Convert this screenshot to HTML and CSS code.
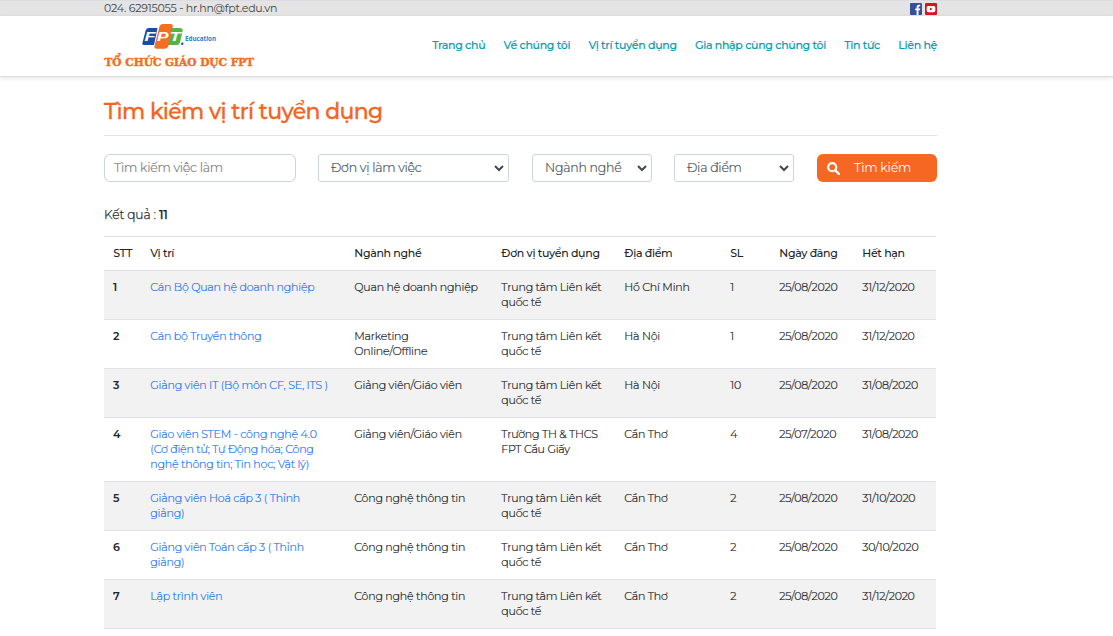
FILE: index.html
```html
<!DOCTYPE html>
<html lang="vi">
<head>
<meta charset="utf-8">
<title>Tìm kiếm vị trí tuyển dụng</title>
<link rel="stylesheet" href="styles.css">
</head>
<body>
<div class="topbar">
  <div class="container topbar-inner">
    <span class="contact">024. 62915055 - hr.hn@fpt.edu.vn</span>
    <div class="social">
      <svg width="12" height="12" viewBox="0 0 12 12"><rect width="12" height="12" rx="1" fill="#36519a"/><path d="M6.600 12V7.300H5.200V5.400h1.400V4.200c0-1.700.9-2.500 2.300-2.500h1.300v1.800h-.8c-.7 0-.9.3-.9.9v1h1.700l-.2 1.900H8.500V12z" fill="#fff"/></svg>
      <svg width="12" height="12" viewBox="0 0 12 12"><rect width="12" height="12" rx="1" fill="#cf1820"/><rect x="1.700" y="3" width="8.600" height="6.200" rx="1.600" fill="#fff"/><path d="M5 4.600v3l2.600-1.500z" fill="#cf1820"/></svg>
    </div>
  </div>
</div>
<header class="header">
  <div class="container header-inner">
    <svg class="logo" width="152" height="52" viewBox="0 0 152 52">
      <path d="M41.500 9Q42.300 6 45 6H53.500L50 23H40.500Q38 23 38.400 21z" fill="#164f9f"/>
      <path d="M66.500 6H75Q79.300 6 78.600 9L76 20.500Q75.400 23 72.500 23H62z" fill="#4db748"/>
      <path d="M55.300 5Q56.100 2 59 2H66.500Q69.200 2 68.700 5L64.500 23.500Q63.500 26.700 60.500 26.700H52.500Q49.900 26.700 50.500 24z" fill="#f36f21"/>
      <g class="logo-letter"><text x="40.500" y="18.800" textLength="11" lengthAdjust="spacingAndGlyphs">F</text><text x="53" y="18.800" textLength="11.500" lengthAdjust="spacingAndGlyphs">P</text><text x="65.500" y="18.800" textLength="11" lengthAdjust="spacingAndGlyphs">T</text></g>
      <circle cx="78.300" cy="21.700" r="1.200" fill="#164f9f"/>
      <text class="logo-edu" x="81" y="19" textLength="31" lengthAdjust="spacingAndGlyphs">Education</text>
      <text class="logo-org" x="0.500" y="43.700" textLength="149.500" lengthAdjust="spacingAndGlyphs">TỔ CHỨC GIÁO DỤC FPT</text>
    </svg>
    <nav class="nav">
      <a>Trang chủ</a><a>Về chúng tôi</a><a>Vị trí tuyển dụng</a><a>Gia nhập cùng chúng tôi</a><a>Tin tức</a><a>Liên hệ</a>
    </nav>
  </div>
</header>
<main class="container">
  <h1>Tìm kiếm vị trí tuyển dụng</h1>
  <form class="search">
    <div class="field keyword"><span>Tìm kiếm việc làm</span></div>
    <div class="field select"><span>Đơn vị làm việc</span><svg width="10" height="7" viewBox="0 0 10 7"><path d="M1 1l4 4 4-4"/></svg></div>
    <div class="field select"><span>Ngành nghề</span><svg width="10" height="7" viewBox="0 0 10 7"><path d="M1 1l4 4 4-4"/></svg></div>
    <div class="field select"><span>Địa điểm</span><svg width="10" height="7" viewBox="0 0 10 7"><path d="M1 1l4 4 4-4"/></svg></div>
    <div class="submit"><svg width="13" height="13" viewBox="0 0 13 13"><circle cx="5.200" cy="5.200" r="4" fill="none" stroke="#fff" stroke-width="2.200"/><path d="M8.300 8.300l3.500 3.500" stroke="#fff" stroke-width="2.500" stroke-linecap="round"/></svg><span>Tìm kiếm</span></div>
  </form>
  <p class="result">Kết quả : <b>11</b></p>
  <table>
    <colgroup><col class="c1"><col class="c2"><col class="c3"><col class="c4"><col class="c5"><col class="c6"><col class="c7"><col class="c8"></colgroup>
    <thead><tr><th>STT</th><th>Vị trí</th><th>Ngành nghề</th><th>Đơn vị tuyển dụng</th><th>Địa điểm</th><th>SL</th><th>Ngày đăng</th><th>Hết hạn</th></tr></thead>
    <tbody>
      <tr><th>1</th><td><a>Cán Bộ Quan hệ doanh nghiệp</a></td><td>Quan hệ doanh nghiệp</td><td>Trung tâm Liên kết<br>quốc tế</td><td>Hồ Chí Minh</td><td>1</td><td>25/08/2020</td><td>31/12/2020</td></tr>
      <tr><th>2</th><td><a>Cán bộ Truyền thông</a></td><td>Marketing<br>Online/Offline</td><td>Trung tâm Liên kết<br>quốc tế</td><td>Hà Nội</td><td>1</td><td>25/08/2020</td><td>31/12/2020</td></tr>
      <tr><th>3</th><td><a>Giảng viên IT (Bộ môn CF, SE, ITS )</a></td><td>Giảng viên/Giáo viên</td><td>Trung tâm Liên kết<br>quốc tế</td><td>Hà Nội</td><td>10</td><td>25/08/2020</td><td>31/08/2020</td></tr>
      <tr><th>4</th><td><a>Giáo viên STEM - công nghệ 4.0<br>(Cơ điện tử; Tự Động hóa; Công<br>nghệ thông tin; Tin học; Vật lý)</a></td><td>Giảng viên/Giáo viên</td><td>Trường TH &amp; THCS<br>FPT Cầu Giấy</td><td>Cần Thơ</td><td>4</td><td>25/07/2020</td><td>31/08/2020</td></tr>
      <tr><th>5</th><td><a>Giảng viên Hoá cấp 3 ( Thỉnh<br>giảng)</a></td><td>Công nghệ thông tin</td><td>Trung tâm Liên kết<br>quốc tế</td><td>Cần Thơ</td><td>2</td><td>25/08/2020</td><td>31/10/2020</td></tr>
      <tr><th>6</th><td><a>Giảng viên Toán cấp 3 ( Thỉnh<br>giảng)</a></td><td>Công nghệ thông tin</td><td>Trung tâm Liên kết<br>quốc tế</td><td>Cần Thơ</td><td>2</td><td>25/08/2020</td><td>30/10/2020</td></tr>
      <tr><th>7</th><td><a>Lập trình viên</a></td><td>Công nghệ thông tin</td><td>Trung tâm Liên kết<br>quốc tế</td><td>Cần Thơ</td><td>2</td><td>25/08/2020</td><td>31/12/2020</td></tr>
    </tbody>
  </table>
</main>
</body>
</html>
```
FILE: styles.css
```css
* { box-sizing: border-box; }
body { margin: 0; height: 636px; overflow: hidden; background: #fff; color: #212529; font: 11px/15px Montserrat, Inter, sans-serif; }
.container { width: 833px; margin-left: 104px; }
.topbar { height: 16px; background: #e4e4e4; border-top: 1px solid #dcdce2; }
.topbar-inner { display: flex; justify-content: space-between; }
.contact { line-height: 14px; color: #3f4347; letter-spacing: -.23px; white-space: nowrap; }
.social { display: flex; gap: 3px; padding-top: 2px; }
.social svg { display: block; }
.header { height: 61px; border-bottom: 1px solid #dedede; box-shadow: 0 1px 4px rgba(0,0,0,.12); }
.header-inner { display: flex; justify-content: space-between; }
.logo { display: block; margin-top: 6px; overflow: visible; }
.logo-letter { font: italic bold 13.5px "Liberation Sans", sans-serif; fill: #fff; }
.logo-edu { font: bold 7.5px "Open Sans", sans-serif; fill: #1687c9; }
.logo-org { font: bold 11.3px "DejaVu Serif", serif; fill: #f37021; stroke: #f37021; stroke-width: .5px; }
.nav { display: flex; gap: 18.300px; padding-top: 22px; color: #079fb4; font-weight: 500; letter-spacing: -.33px; white-space: nowrap; -webkit-text-stroke: .15px; }
h1 { margin: 0; height: 59px; padding-top: 20px; border-bottom: 1px solid #e3e3e3; color: #f26522; font-size: 22px; line-height: 30px; font-weight: 500; letter-spacing: -.65px; white-space: nowrap; -webkit-text-stroke: .3px; }
.search { display: flex; margin-top: 18px; font-size: 12.500px; font-weight: 300; letter-spacing: -.24px; white-space: nowrap; -webkit-text-stroke: .2px; }
.field { width: 120px; height: 28px; display: flex; align-items: center; border: 1px solid #ced4da; border-radius: 3px; color: #495057; }
.field span, .submit span { padding-bottom: 2px; }
.keyword { width: 192px; margin-right: 22px; border-radius: 6px; padding-left: 9px; color: #747b82; }
.select { justify-content: space-between; padding: 0 4px 0 12px; margin-right: 22px; }
.select:nth-child(2) { width: 191px; margin-right: 23px; }
.select:nth-child(4) { margin-right: 23px; }
.select path { fill: none; stroke: #404850; stroke-width: 2; }
.submit { width: 120px; height: 28px; display: flex; align-items: center; gap: 14px; padding-left: 10px; border-radius: 6px; background: #f66723; color: #fff; font-weight: 400; -webkit-text-stroke: 0; }
.result { margin: 22px 0 11px; height: 21px; line-height: 22px; font-size: 12.200px; font-weight: 300; letter-spacing: -.08px; -webkit-text-stroke: .25px; }
.result b { font-weight: 500; }
table { width: 832px; table-layout: fixed; border-collapse: separate; border-spacing: 0; letter-spacing: -.2px; }
th, td { border-top: 1px solid #dee2e6; padding: 9px 0 9px 9px; text-align: left; vertical-align: top; white-space: nowrap; }
td { font-weight: 300; padding-left: 9.300px; -webkit-text-stroke: .22px; }
thead th { font-weight: 500; letter-spacing: -.33px; padding-left: 9.300px; }
tbody th { font-weight: 600; }
tbody tr:nth-child(odd) { background: #f2f2f2; }
tbody tr:last-child > * { border-bottom: 1px solid #dee2e6; }
td a { color: #2878f0; }
.c1 { width: 37px; } .c2 { width: 204px; } .c3 { width: 147px; } .c4 { width: 123px; }
.c5 { width: 106px; } .c6 { width: 49px; } .c7 { width: 83px; } .c8 { width: 83px; }
```
